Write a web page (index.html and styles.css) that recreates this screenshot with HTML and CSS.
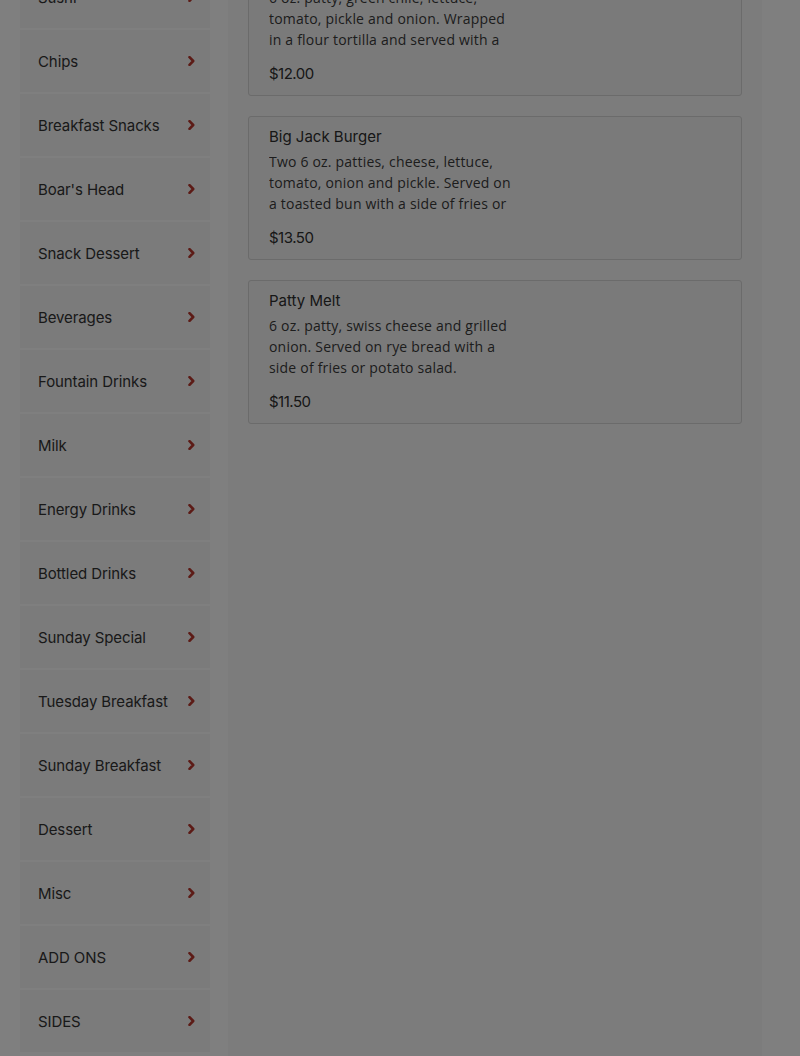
FILE: index.html
```html
<!DOCTYPE html>
<html lang="en">
<head>
<meta charset="utf-8">
<title>Menu</title>
<link rel="stylesheet" href="styles.css">
</head>
<body>
<div class="page">
  <nav class="sidebar">
    <a class="cat"><span>Sushi</span><svg class="chev" viewBox="0 0 7 10" width="7" height="10"><polyline points="1.5,1.2 5.2,5 1.5,8.8"/></svg></a>
    <a class="cat"><span>Chips</span><svg class="chev" viewBox="0 0 7 10" width="7" height="10"><polyline points="1.5,1.2 5.2,5 1.5,8.8"/></svg></a>
    <a class="cat"><span>Breakfast Snacks</span><svg class="chev" viewBox="0 0 7 10" width="7" height="10"><polyline points="1.5,1.2 5.2,5 1.5,8.8"/></svg></a>
    <a class="cat"><span>Boar's Head</span><svg class="chev" viewBox="0 0 7 10" width="7" height="10"><polyline points="1.5,1.2 5.2,5 1.5,8.8"/></svg></a>
    <a class="cat"><span>Snack Dessert</span><svg class="chev" viewBox="0 0 7 10" width="7" height="10"><polyline points="1.5,1.2 5.2,5 1.5,8.8"/></svg></a>
    <a class="cat"><span>Beverages</span><svg class="chev" viewBox="0 0 7 10" width="7" height="10"><polyline points="1.5,1.2 5.2,5 1.5,8.8"/></svg></a>
    <a class="cat"><span>Fountain Drinks</span><svg class="chev" viewBox="0 0 7 10" width="7" height="10"><polyline points="1.5,1.2 5.2,5 1.5,8.8"/></svg></a>
    <a class="cat"><span>Milk</span><svg class="chev" viewBox="0 0 7 10" width="7" height="10"><polyline points="1.5,1.2 5.2,5 1.5,8.8"/></svg></a>
    <a class="cat"><span>Energy Drinks</span><svg class="chev" viewBox="0 0 7 10" width="7" height="10"><polyline points="1.5,1.2 5.2,5 1.5,8.8"/></svg></a>
    <a class="cat"><span>Bottled Drinks</span><svg class="chev" viewBox="0 0 7 10" width="7" height="10"><polyline points="1.5,1.2 5.2,5 1.5,8.8"/></svg></a>
    <a class="cat"><span>Sunday Special</span><svg class="chev" viewBox="0 0 7 10" width="7" height="10"><polyline points="1.5,1.2 5.2,5 1.5,8.8"/></svg></a>
    <a class="cat"><span>Tuesday Breakfast</span><svg class="chev" viewBox="0 0 7 10" width="7" height="10"><polyline points="1.5,1.2 5.2,5 1.5,8.8"/></svg></a>
    <a class="cat"><span>Sunday Breakfast</span><svg class="chev" viewBox="0 0 7 10" width="7" height="10"><polyline points="1.5,1.2 5.2,5 1.5,8.8"/></svg></a>
    <a class="cat"><span>Dessert</span><svg class="chev" viewBox="0 0 7 10" width="7" height="10"><polyline points="1.5,1.2 5.2,5 1.5,8.8"/></svg></a>
    <a class="cat"><span>Misc</span><svg class="chev" viewBox="0 0 7 10" width="7" height="10"><polyline points="1.5,1.2 5.2,5 1.5,8.8"/></svg></a>
    <a class="cat"><span>ADD ONS</span><svg class="chev" viewBox="0 0 7 10" width="7" height="10"><polyline points="1.5,1.2 5.2,5 1.5,8.8"/></svg></a>
    <a class="cat"><span>SIDES</span><svg class="chev" viewBox="0 0 7 10" width="7" height="10"><polyline points="1.5,1.2 5.2,5 1.5,8.8"/></svg></a>
  </nav>
  <main class="panel">
    <div class="item">
      <div class="item-title">Green Chile Burrito Burger</div>
      <div class="item-desc">6 oz. patty, green chile, lettuce, tomato, pickle and onion. Wrapped in a flour tortilla and served with a side of fries or potato salad.</div>
      <div class="item-price">$12.00</div>
    </div>
    <div class="item">
      <div class="item-title">Big Jack Burger</div>
      <div class="item-desc">Two 6 oz. patties, cheese, lettuce, tomato, onion and pickle. Served on a toasted bun with a side of fries or potato salad.</div>
      <div class="item-price">$13.50</div>
    </div>
    <div class="item">
      <div class="item-title">Patty Melt</div>
      <div class="item-desc">6 oz. patty, swiss cheese and grilled onion. Served on rye bread with a side of fries or potato salad.</div>
      <div class="item-price">$11.50</div>
    </div>
  </main>
</div>
<div class="backdrop"></div>
</body>
</html>
```
FILE: styles.css
```css
html, body {
  margin: 0;
  padding: 0;
  background: #ffffff;
  overflow: hidden;
  height: 1056px;
}

.page {
  display: flex;
  align-items: flex-start;
  gap: 18px;
  padding: 0 38px 0 20px;
  margin-top: -68px;
}

.sidebar {
  width: 190px;
  flex: 0 0 190px;
  display: flex;
  flex-direction: column;
  gap: 2px;
  margin-top: 34px;
}

.cat {
  height: 62px;
  display: flex;
  align-items: center;
  justify-content: space-between;
  padding: 0 15px 0 18px;
  background: #f6f6f6;
  color: #333333;
  font-family: "Inter", "Liberation Sans", sans-serif;
  font-size: 15px;
  font-weight: 400;
  letter-spacing: -0.1px;
  text-decoration: none;
}

.chev {
  display: block;
  fill: none;
  stroke: #b8362c;
  stroke-width: 2.6;
  stroke-linecap: round;
  stroke-linejoin: round;
}

.panel {
  flex: 0 0 534px;
  width: 534px;
  box-sizing: border-box;
  min-height: 1200px;
  background: #f9f9f9;
  padding: 20px;
  display: flex;
  flex-direction: column;
  gap: 20px;
}

.item {
  border: 1px solid #d6d6d6;
  border-radius: 3px;
  background: #f5f5f5;
  padding: 10px 20px 11px;
}

.item-title {
  font-family: "Inter", "Liberation Sans", sans-serif;
  font-size: 15px;
  font-weight: 400;
  line-height: 20px;
  color: #2e2e2e;
  margin-bottom: 4px;
}

.item-desc {
  width: 248px;
  font-family: "Open Sans", "Noto Sans", sans-serif;
  font-size: 14px;
  line-height: 21px;
  letter-spacing: 0.2px;
  color: #3a3a3a;
  height: 63px;
  overflow: hidden;
}

.item-price {
  margin-top: 14px;
  font-family: "Inter", "Liberation Sans", sans-serif;
  font-size: 15px;
  font-weight: 400;
  line-height: 20px;
  letter-spacing: -0.5px;
  color: #2e2e2e;
}

.backdrop {
  position: fixed;
  inset: 0;
  background: rgba(0, 0, 0, 0.5);
}
```
